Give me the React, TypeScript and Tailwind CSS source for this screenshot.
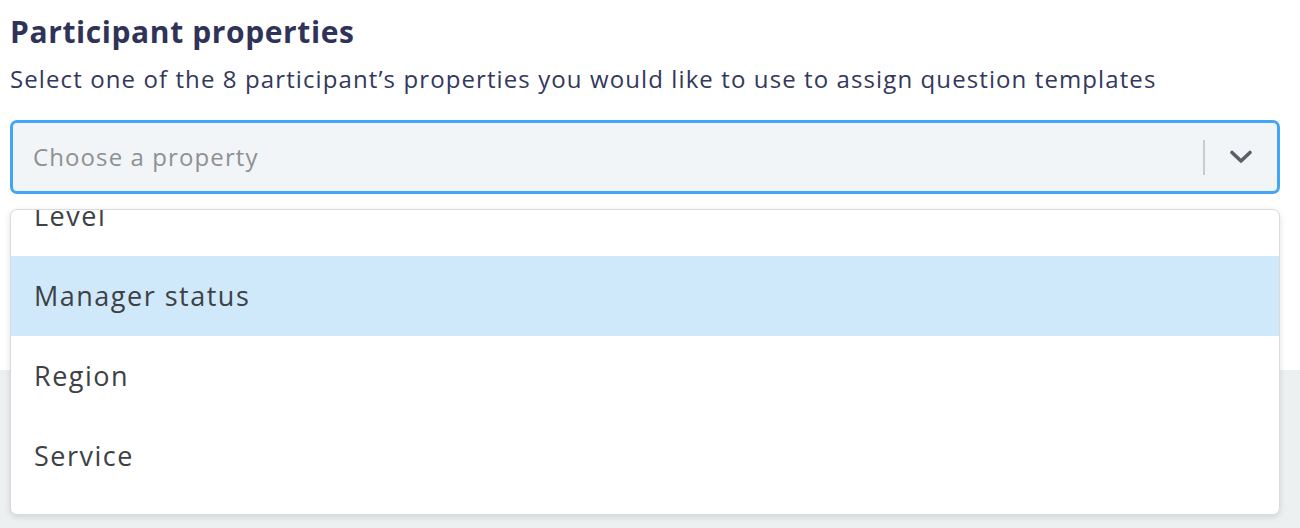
import React from 'react';

const items = ['Level', 'Manager status', 'Region', 'Service'];

const Chevron: React.FC = () => (
  <svg width="24" height="16" viewBox="0 0 24 16" fill="none">
    <path d="M3 3.5l9 8.5 9-8.5" stroke="#5c5f63" strokeWidth="3.6" strokeLinecap="round" strokeLinejoin="round" />
  </svg>
);

export default function App() {
  const active = 'Manager status';

  return (
    <div className="w-[1300px] h-[528px] flex flex-col bg-white overflow-hidden" style={{ fontFamily: '"Open Sans", Lato, sans-serif' }}>
      <div className="relative h-[370px] shrink-0 pl-[10px] pr-[20px] pt-[12px]">
        <h1 className="text-[30px] leading-[40px] font-bold tracking-[0.6px] text-[#2f3358]">Participant properties</h1>
        <p className="mt-[11px] text-[24px] leading-[32px] tracking-[1.1px] text-[#33385c]">
          Select one of the 8 participant’s properties you would like to use to assign question templates
        </p>

        <div className="mt-[25px] h-[74px] flex items-center rounded-[7px] border-[3px] border-[#42a5f5] bg-[#f1f5f7] pl-[20px] pr-[24px]">
          <span className="flex-1 text-[24px] tracking-[1.1px] text-[#8d9194]">Choose a property</span>
          <div className="w-[2px] h-[35px] bg-[#cbcbcb] mr-[24px]" />
          <Chevron />
        </div>

        {/* open menu */}
        <div className="absolute left-[10px] top-[209px] w-[1270px] h-[306px] z-10 overflow-hidden rounded-[7px] border border-[#d9dadb] bg-white shadow-[0_2px_6px_rgba(0,0,0,0.12)]">
          <div className="-mt-[34px]">
            {items.map((item) => (
              <div
                key={item}
                className={`h-[80px] flex items-center pl-[23px] text-[27px] tracking-[1.5px] text-[#3d4145] ${item === active ? 'bg-[#cfe8fa]' : ''}`}
              >
                {item}
              </div>
            ))}
          </div>
        </div>
      </div>
      <div className="flex-1 bg-[#edf0f1]" />
    </div>
  );
}
